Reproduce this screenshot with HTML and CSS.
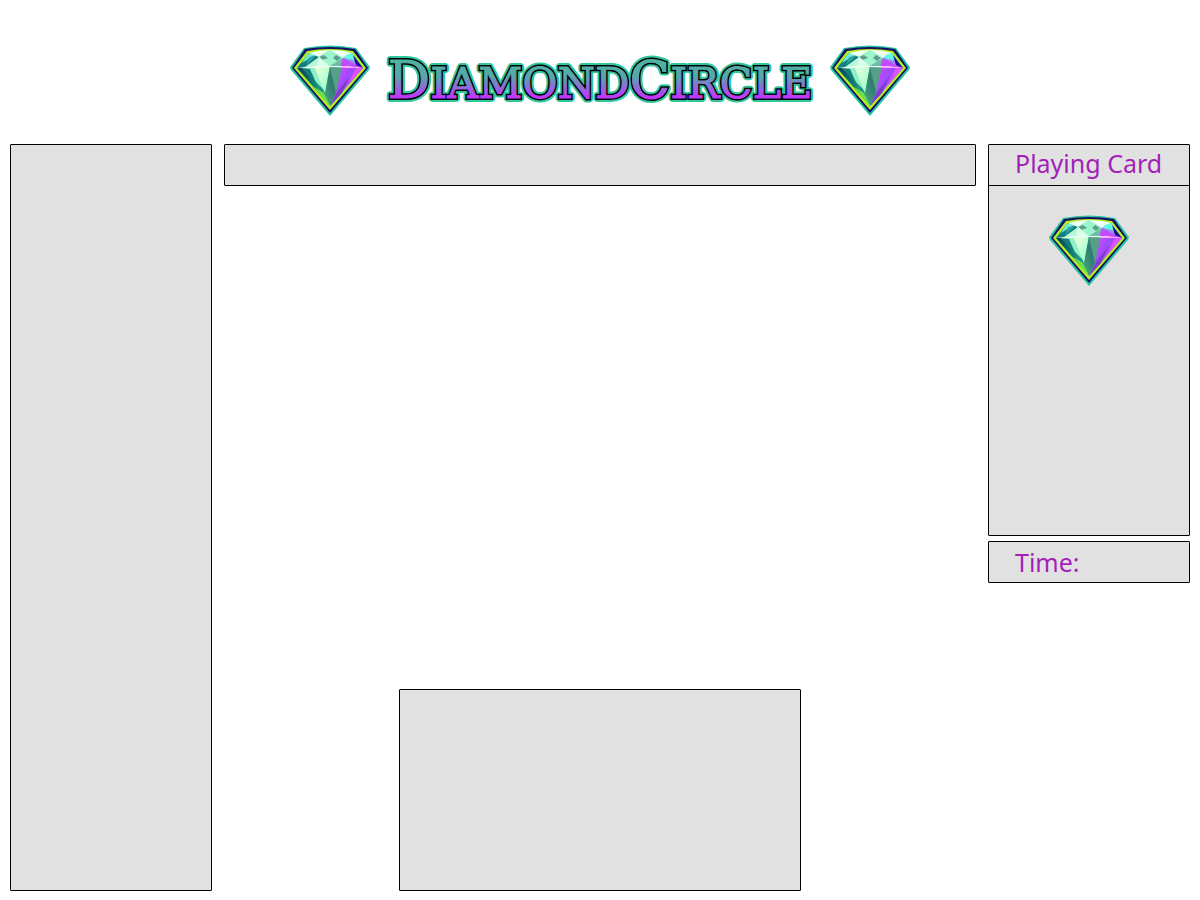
FILE: index.html
```html
<!DOCTYPE html>
<html lang="en">
<head>
<meta charset="utf-8">
<title>DiamondCircle</title>
<link rel="stylesheet" href="styles.css">
</head>
<body>
<svg class="defs" aria-hidden="true">
  <defs>
    <linearGradient id="word-fill" gradientUnits="userSpaceOnUse" x1="0" y1="14" x2="0" y2="57">
      <stop offset="0" stop-color="#4cb3a0"/>
      <stop offset=".42" stop-color="#55a9ab"/>
      <stop offset=".9" stop-color="#c038ff"/>
      <stop offset="1" stop-color="#c038ff"/>
    </linearGradient>
    <linearGradient id="left-face" x1="0" y1="0" x2="1" y2="1">
      <stop offset="0" stop-color="#f4ffe0"/>
      <stop offset="1" stop-color="#8fffc8"/>
    </linearGradient>
    <linearGradient id="mid-face" x1="1" y1="0" x2="0" y2="1">
      <stop offset="0" stop-color="#7cbd9e"/>
      <stop offset=".5" stop-color="#2d7c6e"/>
      <stop offset="1" stop-color="#4ba880"/>
    </linearGradient>
    <linearGradient id="right-face" x1="0" y1="0" x2="1" y2="1">
      <stop offset="0" stop-color="#c945ff"/>
      <stop offset=".5" stop-color="#a64bff"/>
      <stop offset="1" stop-color="#5b2e9c"/>
    </linearGradient>
    <linearGradient id="low-face" x1="0" y1="0" x2="1" y2="1">
      <stop offset="0" stop-color="#0a3c5a"/>
      <stop offset=".5" stop-color="#0f7f78"/>
      <stop offset="1" stop-color="#73ed50"/>
    </linearGradient>
    <symbol id="diamond" viewBox="0 0 80 72">
      <path d="M14 4Q40-1 66 4L80 23L79 26L40 72L1 26L0 23Z" fill="#28c3a1"/>
      <path d="M15 5Q40 1 65 5L78 24L40 69L2 24Z" fill="#160f63"/>
      <path d="M17 7Q40 3 63 7L76 24L40 66L4 24Z" fill="#b1f01d"/>
      <path d="M19 9Q40 5 62 9L73 24L40 62L7 24Z" fill="#5bd3ad"/>
      <path d="M19 9L29 13L22 22L7 24Z" fill="#117f82"/>
      <path d="M19 9L25 11L12 19L15 14Z" fill="#73e9dd"/>
      <path d="M19 13L26 12L16 21Z" fill="#2fa79d"/>
      <path d="M19 9Q29 6 40 6L29 13Z" fill="#ecfff5"/>
      <path d="M40 6L29 13L40 22L53 14Z" fill="#9cf5cc"/>
      <path d="M29 13L34 11L38 14L32 16ZM43 14L46 11L51 14L47 17Z" fill="#5f9e8f"/>
      <path d="M40 6Q53 6 62 9L53 14Z" fill="#ecfff7"/>
      <path d="M62 9L67 17L53 14L56 11Z" fill="#66f7e8"/>
      <path d="M29 13L40 22L15 23Z" fill="#b8f7da"/>
      <path d="M29 13L40 22L27 22Z" fill="#dcffe8"/>
      <path d="M40 22L53 14L51 23Z" fill="#70bca6"/>
      <path d="M53 14L67 19L73 24L50 23Z" fill="#c34bff"/>
      <path d="M53 14L67 17L66 21Z" fill="#9b8cf0"/>
      <path d="M63 11L73 24L66 21Z" fill="#1b0793"/>
      <path d="M7 24L13 23L36 51L40 62Z" fill="url(#low-face)"/>
      <path d="M13 23L22 23L35 49L38 58Z" fill="#229682"/>
      <path d="M12 24L25 23L35 47Z" fill="#8ff0c8"/>
      <path d="M12 24L20 25L28 43Z" fill="#138078"/>
      <path d="M24 22L40 22L35 49Z" fill="url(#left-face)"/>
      <path d="M24 43L34 49L40 62Z" fill="#6fe04c"/>
      <path d="M40 22L35 49L40 62L46 49L52 23Z" fill="url(#mid-face)"/>
      <path d="M40 22L52 23L46 49Z" fill="#579f88"/>
      <path d="M52 23L73 24L40 62L46 49Z" fill="url(#right-face)"/>
      <path d="M66 24L73 24L52 48L60 37Z" fill="#e052ff"/>
      <path d="M58 25L66 24L47 49Z" fill="#9f4cff"/>
      <path d="M60 32L52 49L40 62L47 48Z" fill="#7d3bd0"/>
      <path d="M7 24L24 22L40 22L56 22L73 24L40 23L24 24Z" fill="#e8fff1"/>
      <path d="M52 22L73 24L52 24Z" fill="#ffa1ff"/>
    </symbol>
  </defs>
</svg>

<header class="banner">
  <svg class="gem" aria-hidden="true"><use href="#diamond"/></svg>
  <h1 class="wordmark">
    <svg class="wordmark-art" viewBox="0 0 428 72" role="img" aria-label="DiamondCircle">
      <defs>
        <text id="word" class="word" x="214" y="54" text-anchor="middle"><tspan class="cap">D</tspan>IAMOND<tspan class="cap">C</tspan>IRCLE</text>
      </defs>
      <use href="#word" class="word-glow"/>
      <use href="#word" class="word-edge"/>
      <use href="#word" class="word-face"/>
    </svg>
  </h1>
  <svg class="gem" aria-hidden="true"><use href="#diamond"/></svg>
</header>

<main class="board">
  <aside class="panel"></aside>
  <section class="center">
    <div class="panel bar"></div>
    <div class="panel message"></div>
  </section>
  <aside class="side">
    <section class="panel card">
      <h2 class="label card-title">Playing Card</h2>
      <div class="card-body"><svg class="gem" aria-hidden="true"><use href="#diamond"/></svg></div>
    </section>
    <section class="panel bar"><div class="label">Time:</div></section>
  </aside>
</main>
</body>
</html>
```
FILE: styles.css
```css
* { box-sizing: border-box; }

body {
  margin: 0;
  min-height: 100vh;
  display: flex;
  flex-direction: column;
  background: #fff;
  font-family: "Noto Sans", "Open Sans", sans-serif;
}

.defs { position: absolute; width: 0; height: 0; }

.banner {
  display: flex;
  justify-content: center;
  align-items: center;
  gap: 16px;
  padding: 44px 10px 28px;
}

.gem { display: block; width: 80px; height: 72px; flex: none; }

.wordmark { margin: 0; width: 428px; }
.wordmark-art { display: block; width: 100%; overflow: visible; }

.word {
  font-family: "DejaVu Serif", serif;
  font-weight: 400;
  font-size: 43px;
}
.cap { font-size: 53px; }
.word-glow { fill: #2fc6a0; stroke: #2fc6a0; stroke-width: 8px; stroke-linejoin: round; }
.word-edge { fill: #000; stroke: #000; stroke-width: 4px; }
.word-face { fill: url(#word-fill); stroke: url(#word-fill); stroke-width: 1px; }

.board {
  flex: 1;
  display: grid;
  grid-template-columns: 202px 1fr 202px;
  gap: 12px;
  padding: 0 10px 9px;
}

.panel {
  background: #e1e1e1;
  border: 1px solid #000;
  border-radius: 1px;
}

.center {
  display: flex;
  flex-direction: column;
  justify-content: space-between;
}
.bar { height: 42px; }
.message {
  width: 402px;
  max-width: 100%;
  height: 202px;
  align-self: center;
}

.side { display: flex; flex-direction: column; gap: 5px; }
.card { height: 392px; }
.label {
  margin: 0;
  padding-left: 26px;
  font-size: 25px;
  font-weight: 400;
  line-height: 40px;
  color: #a31fb8;
  white-space: nowrap;
}
.card-title { line-height: 36px; padding-bottom: 4px; border-bottom: 1px solid #000; }
.card-body { display: flex; justify-content: center; padding-top: 28px; }
```
